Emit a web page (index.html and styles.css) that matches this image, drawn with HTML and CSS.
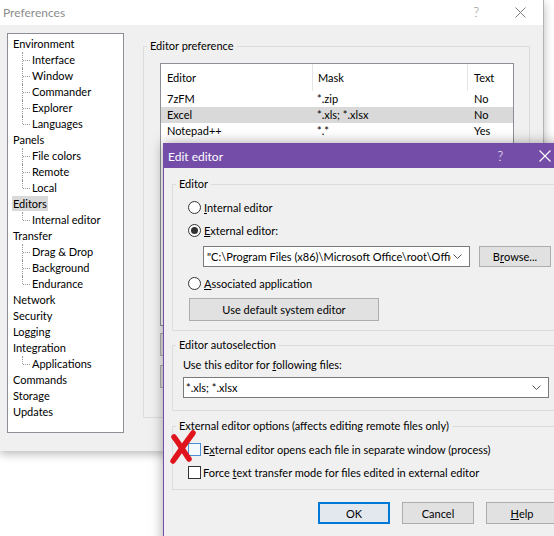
FILE: index.html
```html
<!DOCTYPE html>
<html lang="en">
<head>
<meta charset="utf-8">
<title>Preferences</title>
<link rel="stylesheet" href="styles.css">
</head>
<body>
<div class="desktop">

  <!-- Preferences window (inactive, behind) -->
  <section class="window prefs">
    <header class="prefs-title">
      <span class="caption">Preferences</span>
      <span class="caption-btns">
        <span class="help-q">?</span>
        <svg class="close-x" width="11" height="11" viewBox="0 0 11 11"><path d="M0.5 0.5 L10.5 10.5 M10.5 0.5 L0.5 10.5" stroke="#7c7c7c" stroke-width="1" fill="none"/></svg>
      </span>
    </header>
    <div class="prefs-body">
      <nav class="tree">
        <ul>
          <li><span class="node">Environment</span>
            <ul class="tree-sub">
              <li>Interface</li>
              <li>Window</li>
              <li>Commander</li>
              <li>Explorer</li>
              <li>Languages</li>
            </ul>
          </li>
          <li><span class="node">Panels</span>
            <ul class="tree-sub">
              <li>File colors</li>
              <li>Remote</li>
              <li>Local</li>
            </ul>
          </li>
          <li><span class="node selected">Editors</span>
            <ul class="tree-sub">
              <li>Internal editor</li>
            </ul>
          </li>
          <li><span class="node">Transfer</span>
            <ul class="tree-sub">
              <li>Drag &amp; Drop</li>
              <li>Background</li>
              <li>Endurance</li>
            </ul>
          </li>
          <li><span class="node">Network</span></li>
          <li><span class="node">Security</span></li>
          <li><span class="node">Logging</span></li>
          <li><span class="node">Integration</span>
            <ul class="tree-sub">
              <li>Applications</li>
            </ul>
          </li>
          <li><span class="node">Commands</span></li>
          <li><span class="node">Storage</span></li>
          <li><span class="node">Updates</span></li>
        </ul>
      </nav>

      <fieldset class="group pref-group">
        <legend>Editor preference</legend>
        <div class="pref-group-body">
          <div class="listview">
            <div class="lv-head">
              <span class="c1">Editor</span><span class="c2">Mask</span><span class="c3">Text</span>
            </div>
            <div class="lv-row">
              <span class="c1">7zFM</span><span class="c2">*.zip</span><span class="c3">No</span>
            </div>
            <div class="lv-row current">
              <span class="c1">Excel</span><span class="c2">*.xls; *.xlsx</span><span class="c3">No</span>
            </div>
            <div class="lv-row">
              <span class="c1">Notepad++</span><span class="c2">*.*</span><span class="c3">Yes</span>
            </div>
          </div>
          <div class="pref-buttons">
            <button class="btn" aria-label="Add"></button>
            <button class="btn" aria-label="Edit"></button>
          </div>
        </div>
      </fieldset>
    </div>
  </section>

  <!-- Edit editor dialog (active, in front) -->
  <section class="window edit">
    <header class="edit-title">
      <span class="caption">Edit editor</span>
      <span class="caption-btns">
        <span class="help-q">?</span>
        <svg class="close-x" width="12" height="12" viewBox="0 0 12 12"><path d="M0.5 0.5 L11.5 11.5 M11.5 0.5 L0.5 11.5" stroke="#ffffff" stroke-width="1.1" fill="none"/></svg>
      </span>
    </header>
    <div class="edit-body">

      <fieldset class="group">
        <legend>Editor</legend>
        <div class="editor-group-body">
          <label class="opt-row"><span class="radio"></span><span><u>I</u>nternal editor</span></label>
          <label class="opt-row"><span class="radio checked"></span><span><u>E</u>xternal editor:</span></label>
          <div class="path-row">
            <div class="combo path-combo">
              <span class="combo-text">"C:\Program Files (x86)\Microsoft Office\root\Offic</span>
              <svg class="chev" width="9" height="5" viewBox="0 0 9 5"><path d="M0.5 0.5 L4.5 4.5 L8.5 0.5" stroke="#555" stroke-width="1" fill="none"/></svg>
            </div>
            <button class="btn browse">B<u>r</u>owse...</button>
          </div>
          <label class="opt-row assoc"><span class="radio"></span><span><u>A</u>ssociated application</span></label>
          <button class="btn default-btn">Use default system editor</button>
        </div>
      </fieldset>

      <fieldset class="group auto-group">
        <legend>Editor autoselection</legend>
        <div class="auto-group-body">
          <div class="field-label">Use this editor for <u>f</u>ollowing files:</div>
          <div class="combo mask-combo">
            <span class="combo-text">*.xls; *.xlsx</span>
            <svg class="chev" width="9" height="5" viewBox="0 0 9 5"><path d="M0.5 0.5 L4.5 4.5 L8.5 0.5" stroke="#555" stroke-width="1" fill="none"/></svg>
          </div>
        </div>
      </fieldset>

      <fieldset class="group opts-group">
        <legend>External editor options (affects editing remote files only)</legend>
        <div class="opts-group-body">
          <label class="opt-row"><span class="check hot"></span><span>E<u>x</u>ternal editor opens each file in separate window (process)</span></label>
          <label class="opt-row"><span class="check"></span><span>Force <u>t</u>ext transfer mode for files edited in external editor</span></label>
        </div>
      </fieldset>

      <div class="dialog-buttons">
        <button class="btn ok">OK</button>
        <button class="btn">Cancel</button>
        <button class="btn"><u>H</u>elp</button>
      </div>
    </div>
  </section>

  <!-- red cross drawn over the first option -->
  <svg class="x-mark" width="30" height="36" viewBox="0 0 30 36">
    <path d="M6 7 C10 12, 15 20, 21 29" stroke="#e0141c" stroke-width="5.5" stroke-linecap="round" fill="none"/>
    <path d="M25 3 C19 11, 12 21, 5 31" stroke="#e0141c" stroke-width="5.5" stroke-linecap="round" fill="none"/>
  </svg>
</div>
</body>
</html>
```

FILE: styles.css
```css
* { box-sizing: border-box; }

html, body {
  margin: 0;
  padding: 0;
  background: #ffffff;
}

body {
  width: 554px;
  height: 536px;
  overflow: hidden;
  font-family: Lato, "Noto Sans", sans-serif;
  font-size: 11px;
  color: #000;
}

.desktop {
  position: relative;
  width: 554px;
  height: 536px;
  overflow: hidden;
}

ul { list-style: none; margin: 0; padding: 0; }
u { text-decoration: underline; text-underline-offset: 1px; }

.btn {
  font: inherit;
  color: #000;
  background: #e1e1e1;
  border: 1px solid #adadad;
  padding: 0;
  margin: 0;
  height: 22px;
  display: flex;
  align-items: center;
  justify-content: center;
}

/* ---------- generic window pieces ---------- */

.window {
  position: absolute;
  background: #f0f0f0;
  display: flex;
  flex-direction: column;
}

.caption-btns {
  display: flex;
  align-items: center;
}

.help-q {
  font-size: 13px;
  font-weight: 300;
}

/* ---------- Preferences window ---------- */

.prefs {
  left: 0;
  top: 0;
  width: 544px;
  height: 451px;
  border-right: 1px solid #b4b4b4;
  box-shadow: 0 3px 9px rgba(0, 0, 0, 0.28);
}

.prefs-title {
  height: 25px;
  flex: none;
  background: #fff;
  display: flex;
  align-items: center;
  justify-content: space-between;
  padding: 0 17px 1px 3px;
  color: #8c8c8c;
  font-size: 12px;
}

.prefs-title .help-q { color: #8c8c8c; margin-right: 36px; }

.prefs-body {
  display: flex;
  align-items: flex-start;
  gap: 19px;
  padding: 8px 0 0 7px;
}

.tree {
  width: 117px;
  height: 400px;
  flex: none;
  background: #fff;
  border: 1px solid #8e8f96;
  padding: 2px 0 0 5px;
}

.tree li {
  line-height: 16px;
  white-space: nowrap;
}

.node {
  display: inline-block;
  line-height: 15px;
  padding: 0 1px;
  margin-left: -1px;
}

.node.selected { background: #d9d9d9; }

.tree-sub { margin-left: 9px; }

.tree-sub li {
  position: relative;
  padding-left: 10px;
}

.tree-sub li::before {
  content: "";
  position: absolute;
  left: 0;
  top: 0;
  bottom: 0;
  border-left: 1px dotted #9a9a9a;
}

.tree-sub li:last-child::before { bottom: 8px; }

.tree-sub li::after {
  content: "";
  position: absolute;
  left: 1px;
  top: 8px;
  width: 7px;
  border-top: 1px dotted #9a9a9a;
}

/* group boxes */

.group {
  margin: 0;
  padding: 0;
  min-width: 0;
  border: 1px solid #dcdcdc;
}

.group > legend {
  padding: 0 3px;
  margin-left: 3px;
  line-height: 16px;
}

.pref-group {
  margin-top: 5px;
  width: 387px;
  height: 380px;
  flex: none;
}

.pref-group-body { padding: 9px 16px 0 16px; }

.listview {
  width: 354px;
  height: 263px;
  background: #fff;
  border: 1px solid #8e8f96;
}

.lv-head, .lv-row {
  display: grid;
  grid-template-columns: 151px 155px 1fr;
}

.lv-head { height: 27px; }

.lv-head > span {
  display: flex;
  align-items: center;
}

.lv-head .c2, .lv-head .c3 { border-left: 1px solid #e5e5e5; }

.lv-row { height: 16px; line-height: 16px; }
.lv-row.current { background: #d9d9d9; }

.c1 { padding-left: 6px; }
.c2 { padding-left: 5px; }
.c3 { padding-left: 6px; }
.lv-row .c2 { padding-left: 5px; }
.lv-row .c3 { padding-left: 7px; }

.pref-buttons {
  display: flex;
  flex-direction: column;
  gap: 9px;
  margin-top: 7px;
}

.pref-buttons .btn { width: 90px; height: 23px; }

/* ---------- Edit editor dialog ---------- */

.edit {
  left: 163px;
  top: 143px;
  width: 404px;
  height: 410px;
  border: 1px solid #744da9;
  box-shadow: 0 0 12px rgba(0, 0, 0, 0.35);
}

.edit-title {
  height: 24px;
  flex: none;
  background: #744da9;
  color: #fff;
  font-size: 12px;
  display: flex;
  align-items: center;
  justify-content: space-between;
  padding: 0 15px 0 4px;
}

.edit-title .help-q { color: #fff; margin-right: 36px; }

.edit-body { padding: 8px 8px 0 8px; }

.opt-row {
  display: flex;
  align-items: center;
  height: 16px;
  white-space: nowrap;
}

.radio {
  width: 13px;
  height: 13px;
  flex: none;
  border: 1px solid #333;
  border-radius: 50%;
  background: #fff;
  margin-right: 3px;
  display: flex;
  align-items: center;
  justify-content: center;
}

.radio.checked::before {
  content: "";
  width: 7px;
  height: 7px;
  border-radius: 50%;
  background: #333;
}

.check {
  width: 13px;
  height: 13px;
  flex: none;
  border: 1px solid #333;
  background: #fff;
  margin-right: 2px;
}

.check.hot { border-color: #4a8fd6; background: #f4f9fe; }

.editor-group-body {
  padding: 7px 0 9px 15px;
  display: flex;
  flex-direction: column;
  align-items: flex-start;
}

.editor-group-body .opt-row + .opt-row { margin-top: 7px; }

.path-row {
  display: flex;
  gap: 9px;
  margin: 8px 0 0 15px;
}

.combo {
  height: 21px;
  background: #fff;
  border: 1px solid #7a7a7a;
  display: flex;
  align-items: center;
  justify-content: space-between;
  padding: 0 7px 0 3px;
  white-space: nowrap;
  overflow: hidden;
}

.path-combo { width: 267px; }
.combo-text { flex: 1; min-width: 0; overflow: hidden; text-overflow: clip; }
.chev { flex: none; margin-left: 2px; }

.browse { width: 72px; height: 21px; }

.assoc { margin-top: 8px; }

.default-btn {
  width: 190px;
  height: 23px;
  margin: 7px 0 0 1px;
}

.auto-group { margin-top: 6px; }

.auto-group-body { padding: 4px 0 12px 10px; }

.field-label { line-height: 16px; }

.mask-combo {
  width: 366px;
  margin-top: 4px;
  padding-left: 2px;
}

.opts-group { margin-top: 7px; }

.opts-group-body { padding: 7px 0 9px 15px; }

.opts-group-body .opt-row + .opt-row { margin-top: 7px; }

.dialog-buttons {
  display: flex;
  justify-content: flex-end;
  gap: 12px;
  margin-top: 12px;
}

.dialog-buttons .btn { width: 72px; }

.btn.ok {
  border: 2px solid #0078d7;
  background: #e3e8ee;
}

/* red cross */
.x-mark {
  position: absolute;
  left: 168px;
  top: 430px;
}
```
